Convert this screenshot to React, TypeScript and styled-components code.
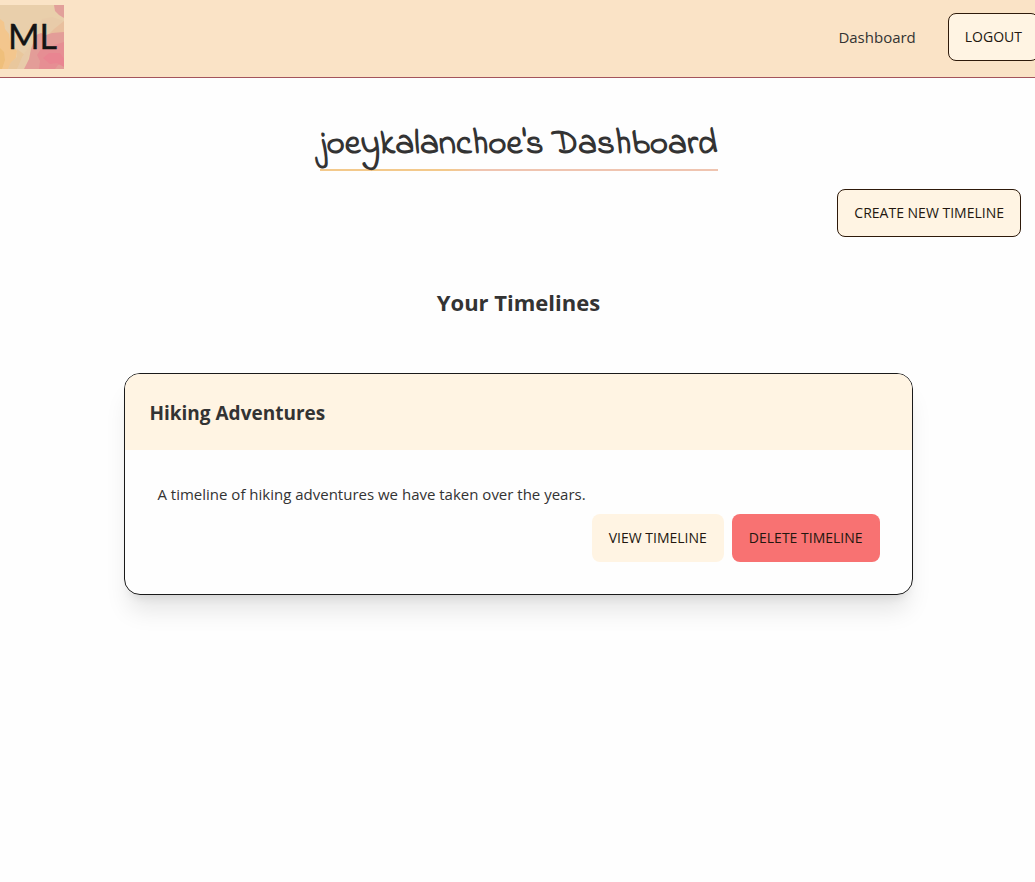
import React from "react";
import styled, { createGlobalStyle } from "styled-components";

const GlobalStyle = createGlobalStyle`
  *, *::before, *::after { box-sizing: border-box; }
  body {
    margin: 0;
    background: #fefefe;
    color: #333333;
    font-family: "Segoe UI", "Open Sans", "Noto Sans", sans-serif;
    font-size: 15px;
    line-height: 24px;
    overflow-x: hidden;
  }
  h1, h2, h3, p { margin: 0; }
`;

const Page = styled.div`
  margin-right: -2px;
`;

const Header = styled.header`
  display: flex;
  align-items: center;
  justify-content: space-between;
  padding: 5px 0 8px;
  background: #fae3c6;
  border-bottom: 1px solid #a4545c;
`;

const LogoLink = styled.a`
  display: block;
  height: 64px;

  svg { display: block; }
`;

const LogoText = styled.text`
  font-family: Lato, sans-serif;
  font-size: 34px;
  fill: #141414;
  stroke: #141414;
  stroke-width: 0.4px;
`;

const Nav = styled.nav`
  display: flex;
  align-items: center;
  gap: 32px;
  margin-right: -2px;
`;

const NavLink = styled.a`
  color: #333333;
  text-decoration: none;
`;

const Button = styled.button<{ $tone?: "cream" | "danger"; $outlined?: boolean }>`
  height: 48px;
  padding: 0 16px;
  border: 1px solid ${(p) => (p.$outlined ? "#2e1a0a" : "transparent")};
  border-radius: 8px;
  background: ${(p) => (p.$tone === "danger" ? "#f87272" : "#fff4e3")};
  color: #23170f;
  font-family: inherit;
  font-size: 14px;
  font-weight: 500;
  line-height: 16px;
  text-transform: uppercase;
  white-space: nowrap;
  cursor: pointer;
`;

const Main = styled.main`
  display: flex;
  flex-direction: column;
  align-items: center;
`;

const PageTitle = styled.h1`
  margin-top: 47px;
  padding-bottom: 5px;
  border-bottom: 2px solid;
  border-image: linear-gradient(90deg, #f3c98b 32%, #efc4b0 40%) 1;
  font-family: "Indie Flower", Lato, cursive;
  font-size: 35px;
  font-weight: 700;
  line-height: 39px;
`;

const Actions = styled.div`
  display: flex;
  justify-content: flex-end;
  align-self: stretch;
  padding: 18px 16px 0;
`;

const SectionTitle = styled.h2`
  margin-top: 49px;
  font-size: 22px;
  font-weight: 700;
  line-height: 32px;
`;

const Card = styled.article`
  width: 76%;
  min-width: 320px;
  margin: 55px 0 48px;
  overflow: hidden;
  border: 1px solid #1a1a1a;
  border-radius: 16px;
  box-shadow: 0 20px 25px -5px rgba(0, 0, 0, 0.1), 0 8px 10px -6px rgba(0, 0, 0, 0.1);
`;

const CardHeader = styled.header`
  padding: 25px 24px 23px;
  background: #fff4e3;
`;

const CardTitle = styled.h3`
  font-size: 19px;
  font-weight: 700;
  line-height: 28px;
`;

const CardBody = styled.div`
  display: flex;
  flex-direction: column;
  gap: 8px;
  padding: 32px;
`;

const CardActions = styled.div`
  display: flex;
  flex-wrap: wrap;
  justify-content: flex-end;
  gap: 8px;
`;

function Logo() {
  return (
    <svg width="64" height="64" viewBox="0 0 64 64" role="img" aria-label="ML">
      <rect width="64" height="64" fill="#e9cfab" />
      <path d="M0 14 L4 17 L5 24 L9 29 L10 36 L14 41 L17 46 L16 53 L11 58 L8 64 H0Z" fill="#f3c68d" />
      <path d="M0 43 L4 47 L5 55 L2 64 H0Z" fill="#efbf7b" />
      <path d="M17 44 L25 50 L22 56 L17 64 H8 L11 57 L17 52Z" fill="#e9c79c" />
      <path d="M42 14 L52 12 L64 16 V29 L49 29 L38 34 L31 44 L28 54 L24 64 H17 L22 52 L31 39Z" fill="#e8cba9" />
      <path d="M64 16 V30 H48 L54 24Z" fill="#e8bf9e" />
      <path d="M36 30 L41 28 L46 30 L52 28 L64 27 V64 H24 L29 54 L31 44Z" fill="#e39d98" />
      <path d="M41 44 H50 L54 40 L64 37 V58 L58 60 L55 64 H39 L40 56 L37 50Z" fill="#e68e93" />
      <path d="M49 48 L60 48 L64 54 V62 L57 58 L50 59 L43 53Z" fill="#e98591" />
      <path d="M54 0 H64 V13 L59 10 L55 6Z" fill="#e2a09a" />
      <LogoText x="8" y="44">ML</LogoText>
    </svg>
  );
}

const timelines = [
  {
    title: "Hiking Adventures",
    description: "A timeline of hiking adventures we have taken over the years.",
  },
];

export default function App() {
  return (
    <>
      <GlobalStyle />
      <Page>
        <Header>
          <LogoLink href="#home">
            <Logo />
          </LogoLink>
          <Nav>
            <NavLink href="#dashboard">Dashboard</NavLink>
            <Button $outlined>Logout</Button>
          </Nav>
        </Header>
        <Main>
          <PageTitle>joeykalanchoe's Dashboard</PageTitle>
          <Actions>
            <Button $outlined>Create New Timeline</Button>
          </Actions>
          <SectionTitle>Your Timelines</SectionTitle>
          {timelines.map((timeline) => (
            <Card key={timeline.title}>
              <CardHeader>
                <CardTitle>{timeline.title}</CardTitle>
              </CardHeader>
              <CardBody>
                <p>{timeline.description}</p>
                <CardActions>
                  <Button>View Timeline</Button>
                  <Button $tone="danger">Delete Timeline</Button>
                </CardActions>
              </CardBody>
            </Card>
          ))}
        </Main>
      </Page>
    </>
  );
}
